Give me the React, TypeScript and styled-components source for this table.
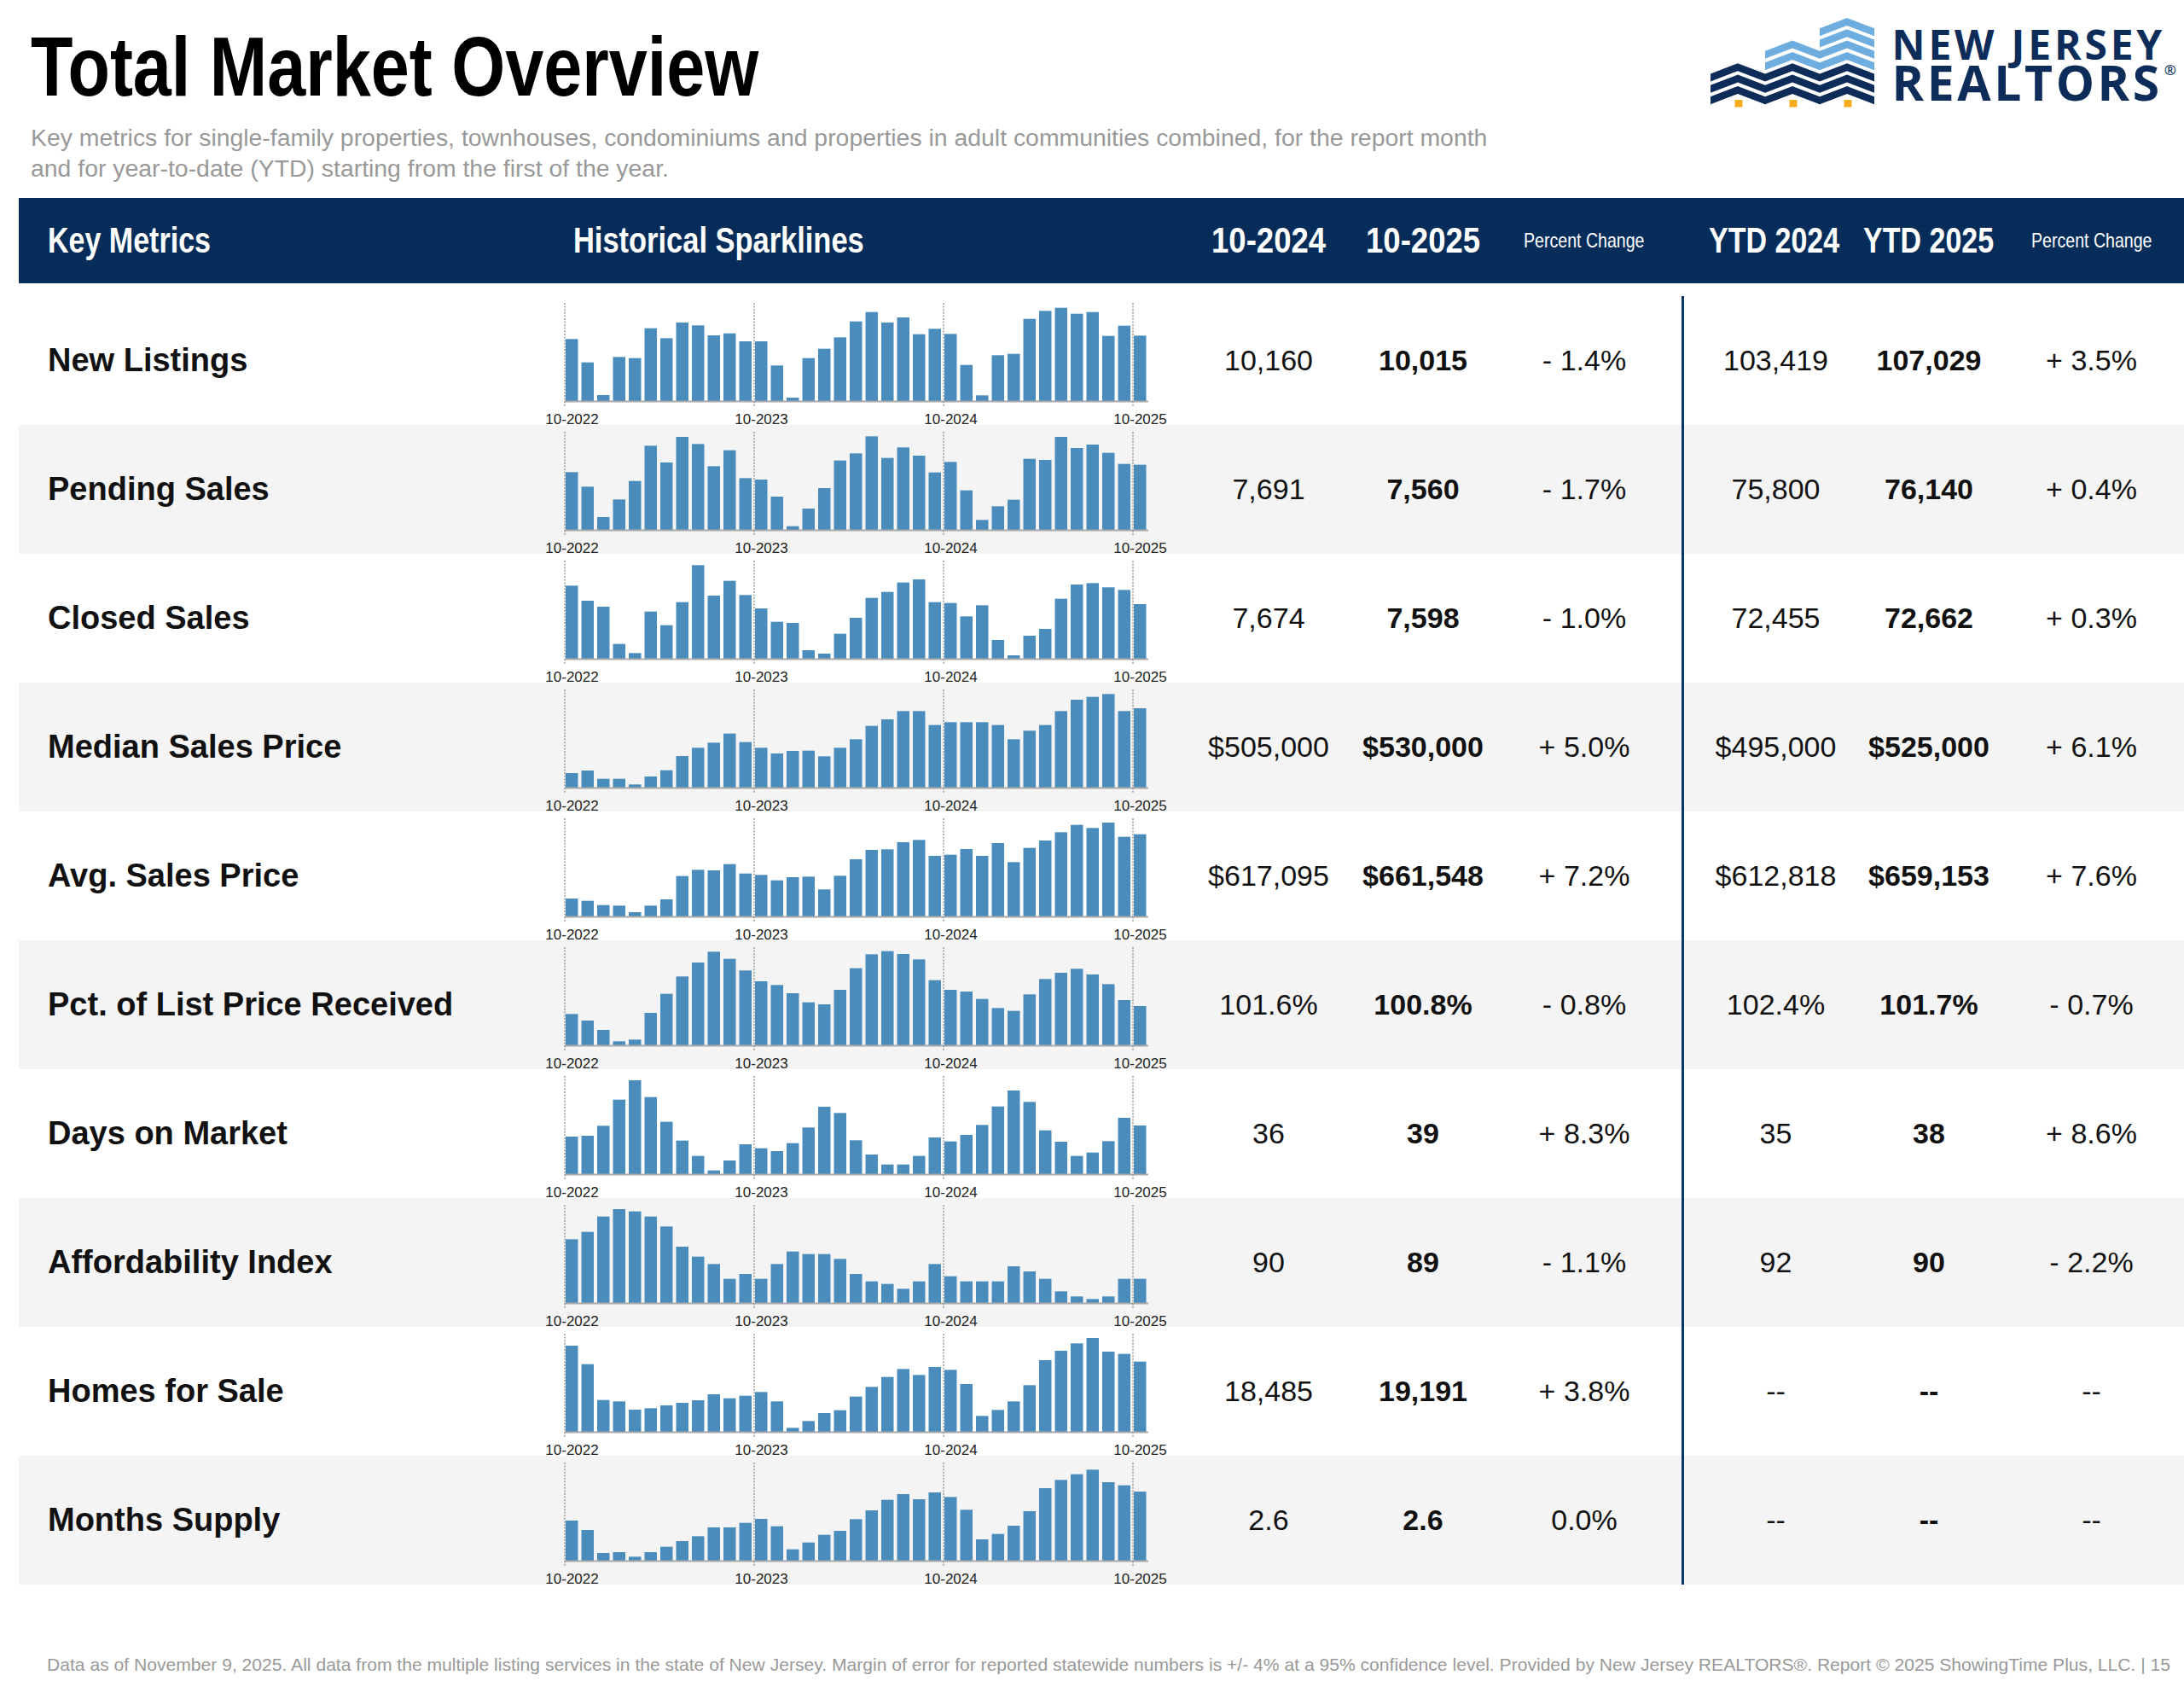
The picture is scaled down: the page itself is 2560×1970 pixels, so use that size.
import styled, { createGlobalStyle } from 'styled-components';

const GlobalStyle = createGlobalStyle`
  html, body {
    margin: 0;
    padding: 0;
    background: #fff;
  }
  body {
    font-family: "Liberation Sans", Arial, sans-serif;
    color: #111;
  }
`;

type Metric = {
  label: string;
  values: string[];
  bars: number[];
};

// bar heights in thirds of a pixel
const metrics: Metric[] = [
  {
    label: 'New Listings',
    values: ['10,160', '10,015', '- 1.4%', '103,419', '107,029', '+ 3.5%'],
    bars: [218, 136, 21, 155, 151, 256, 221, 276, 266, 231, 238, 210, 210, 125, 12, 151, 184, 224, 280, 313, 276, 294, 235, 254, 236, 127, 20, 161, 166, 289, 317, 328, 307, 313, 229, 265, 230],
  },
  {
    label: 'Pending Sales',
    values: ['7,691', '7,560', '- 1.7%', '75,800', '76,140', '+ 0.4%'],
    bars: [203, 152, 45, 107, 172, 296, 237, 327, 302, 224, 280, 182, 177, 117, 13, 75, 147, 244, 269, 329, 253, 290, 261, 202, 239, 139, 35, 83, 106, 250, 246, 327, 288, 300, 271, 232, 229],
  },
  {
    label: 'Closed Sales',
    values: ['7,674', '7,598', '- 1.0%', '72,455', '72,662', '+ 0.3%'],
    bars: [257, 204, 183, 52, 20, 166, 118, 199, 329, 222, 274, 224, 177, 130, 126, 30, 18, 88, 144, 214, 235, 268, 279, 199, 196, 149, 188, 66, 12, 81, 105, 211, 261, 266, 251, 242, 192],
  },
  {
    label: 'Median Sales Price',
    values: ['$505,000', '$530,000', '+ 5.0%', '$495,000', '$525,000', '+ 6.1%'],
    bars: [51, 60, 31, 31, 11, 39, 61, 111, 140, 158, 190, 160, 140, 120, 129, 130, 110, 140, 170, 217, 240, 269, 269, 220, 230, 230, 230, 220, 170, 200, 220, 269, 309, 319, 329, 269, 279],
  },
  {
    label: 'Avg. Sales Price',
    values: ['$617,095', '$661,548', '+ 7.2%', '$612,818', '$659,153', '+ 7.6%'],
    bars: [63, 55, 40, 38, 15, 38, 60, 142, 164, 162, 184, 151, 146, 127, 138, 140, 95, 143, 201, 234, 236, 261, 269, 213, 217, 237, 213, 258, 191, 241, 267, 296, 322, 311, 330, 280, 289],
  },
  {
    label: 'Pct. of List Price Received',
    values: ['101.6%', '100.8%', '- 0.8%', '102.4%', '101.7%', '- 0.7%'],
    bars: [110, 87, 54, 14, 20, 114, 181, 242, 291, 329, 304, 263, 225, 212, 183, 151, 144, 195, 271, 320, 331, 321, 302, 229, 195, 189, 163, 131, 121, 179, 233, 255, 269, 249, 215, 159, 138],
  },
  {
    label: 'Days on Market',
    values: ['36', '39', '+ 8.3%', '35', '38', '+ 8.6%'],
    bars: [132, 135, 170, 262, 330, 271, 184, 118, 64, 13, 48, 105, 91, 81, 109, 164, 237, 215, 119, 69, 34, 34, 64, 129, 115, 138, 173, 238, 294, 254, 154, 114, 64, 76, 116, 198, 171],
  },
  {
    label: 'Affordability Index',
    values: ['90', '89', '- 1.1%', '92', '90', '- 2.2%'],
    bars: [224, 250, 304, 330, 322, 304, 269, 198, 163, 137, 85, 102, 85, 137, 181, 172, 172, 155, 102, 76, 67, 50, 76, 137, 94, 76, 76, 76, 129, 111, 85, 41, 23, 14, 23, 85, 85],
  },
  {
    label: 'Homes for Sale',
    values: ['18,485', '19,191', '+ 3.8%', '--', '--', '--'],
    bars: [303, 238, 112, 107, 78, 83, 93, 102, 111, 132, 118, 127, 140, 107, 14, 38, 66, 76, 124, 158, 193, 221, 200, 228, 218, 168, 56, 77, 107, 164, 252, 285, 311, 330, 282, 274, 247],
  },
  {
    label: 'Months Supply',
    values: ['2.6', '2.6', '0.0%', '--', '--', '--'],
    bars: [141, 108, 27, 30, 14, 30, 49, 69, 86, 117, 117, 133, 147, 121, 40, 64, 91, 105, 146, 177, 214, 234, 216, 240, 224, 179, 75, 94, 123, 174, 255, 284, 304, 320, 276, 265, 243],
  },
];

const Page = styled.div`
  width: 2560px;
  height: 1970px;
  display: flex;
  flex-direction: column;
  overflow: hidden;
`;

const TopBar = styled.header`
  height: 232px;
  display: flex;
  justify-content: space-between;
  align-items: flex-start;
`;

const TitleBlock = styled.div`
  padding: 29px 0 0 36px;
`;

// condensed face: no narrow family is installed, so squeeze Liberation Sans
const Narrow = styled.span<{ $sx?: number; $origin?: string }>`
  display: inline-block;
  flex: none;
  white-space: nowrap;
  transform: scaleX(${(p) => p.$sx ?? 0.82});
  transform-origin: ${(p) => p.$origin || 'left'} center;
`;

const Title = styled.h1`
  margin: 0;
  font-weight: 700;
  font-size: 98px;
  line-height: 98px;
  color: #000;
`;

const Subtitle = styled.p`
  margin: 16px 0 0;
  font-size: 28.4px;
  line-height: 36px;
  color: #999;
  white-space: nowrap;
`;

const Logo = styled.div`
  display: flex;
  align-items: flex-start;
  gap: 20px;
  padding: 15px 9px 0 0;
`;

const LogoText = styled.div`
  margin-top: 15px;
  font-family: "Open Sans", sans-serif;
  font-weight: 700;
  color: #0d2c5a;
  line-height: 44px;
`;

const LogoLine = styled.div<{ $size: number; $spacing: number }>`
  font-size: ${(p) => p.$size}px;
  letter-spacing: ${(p) => p.$spacing}px;
  white-space: nowrap;
`;

const Registered = styled.span`
  font-size: 17px;
  font-weight: 600;
  letter-spacing: 0;
  line-height: 0;
  vertical-align: 30px;
  margin-left: 2px;
`;

const Table = styled.section`
  margin-left: 22px;
`;

const COLUMNS = '618px 757px 180px 182px 212px 218px 144px 1fr';

const HeaderBar = styled.div`
  height: 100px;
  display: grid;
  grid-template-columns: ${COLUMNS};
  align-items: center;
  background: #062d5a;
  color: #fff;
  font-weight: 700;
  font-size: 42px;
`;

const HeadCell = styled.div<{ $left?: number; $right?: number; $small?: boolean; $start?: boolean }>`
  display: flex;
  justify-content: ${(p) => (p.$start ? 'flex-start' : 'center')};
  padding-left: ${(p) => p.$left ?? 0}px;
  padding-right: ${(p) => p.$right ?? 0}px;
  white-space: nowrap;
  ${(p) => p.$small && 'font-size: 24px; font-weight: 400;'}
`;

const Rows = styled.div`
  margin-top: 15px;
`;

const Row = styled.div<{ $shade: boolean }>`
  height: 151px;
  display: grid;
  grid-template-columns: ${COLUMNS};
  background: ${(p) => (p.$shade ? '#f4f4f4' : '#fff')};
`;

const Label = styled.div`
  display: flex;
  align-items: center;
  padding-left: 34px;
  font-size: 38px;
  font-weight: 700;
  color: #111;
  white-space: nowrap;
`;

const SparkCell = styled.div`
  position: relative;
`;

const Value = styled.div<{ $bold?: boolean; $divider?: boolean; $pad?: string }>`
  display: flex;
  align-items: center;
  justify-content: center;
  padding: ${(p) => p.$pad || '0'};
  font-size: 34px;
  font-weight: ${(p) => (p.$bold ? 700 : 400)};
  color: #111;
  white-space: nowrap;
  border-left: ${(p) => (p.$divider ? '3px solid #0b3563' : 'none')};
`;

const Footer = styled.footer`
  margin-top: 82px;
  padding-left: 55px;
  font-size: 21.1px;
  line-height: 24px;
  color: #999;
  white-space: nowrap;
`;

const BAR = '#4a8cbc';

const Sparkline = ({ bars }: { bars: number[] }) => (
  <svg width={757} height={151} viewBox="0 0 757 151" style={{ display: 'block', overflow: 'visible' }}>
    {bars.map((v, i) => (
      <rect key={i} x={23 + i * 18.5} y={123 - v / 3} width={14.5} height={v / 3} fill={BAR} />
    ))}
    <line x1={22} x2={706} y1={123.5} y2={123.5} stroke="#a9a9a9" strokeWidth={2} />
    {[0, 1, 2, 3].map((k) => (
      <g key={k}>
        <line
          x1={22 + 222 * k}
          x2={22 + 222 * k}
          y1={8}
          y2={129}
          stroke="#8d8d8d"
          strokeWidth={1.3}
          strokeDasharray="2 1.6"
        />
        <text
          x={30.5 + 222 * k}
          y={149.5}
          textAnchor="middle"
          fontSize={17}
          fontFamily='"Liberation Sans", Arial, sans-serif'
          fill="#222"
        >
          10-{2022 + k}
        </text>
      </g>
    ))}
  </svg>
);

const stripe = (k: number, from: number) => {
  const t = 9;
  const xs = [0, 32, 64, 96, 128, 160, 192].filter((x) => x >= from);
  const yc = (x: number) => ((x / 32) % 2 === 1 ? 63.7 : 76) + 13.33 * k;
  const top = xs.map((x) => `${x},${(yc(x) - t / 2).toFixed(1)}`);
  const bottom = [...xs].reverse().map((x) => `${x},${(yc(x) + t / 2).toFixed(1)}`);
  return [...top, ...bottom].join(' ');
};

const LogoMark = () => (
  <svg width={193} height={112} viewBox="0 0 193 112">
    {[0, 1, 2].map((k) => (
      <polygon key={`n${k}`} points={stripe(k, 0)} fill="#0d2c5a" />
    ))}
    {[-1, -2].map((k) => (
      <polygon key={`m${k}`} points={stripe(k, 64)} fill="#6dade0" />
    ))}
    {[-3, -4].map((k) => (
      <polygon key={`r${k}`} points={stripe(k, 128)} fill="#6dade0" />
    ))}
    {[33, 97, 161].map((x) => (
      <rect key={x} x={x - 4.5} y={102} width={9} height={8.5} fill="#f5ab1e" />
    ))}
  </svg>
);

export default function App() {
  return (
    <Page>
      <GlobalStyle />
      <TopBar>
        <TitleBlock>
          <Title>
            <Narrow $sx={0.826}>Total Market Overview</Narrow>
          </Title>
          <Subtitle>
            Key metrics for single-family properties, townhouses, condominiums and properties in adult communities combined, for the report month
            <br />
            and for year-to-date (YTD) starting from the first of the year.
          </Subtitle>
        </TitleBlock>
        <Logo>
          <LogoMark />
          <LogoText>
            <LogoLine $size={48} $spacing={3.8}>NEW JERSEY</LogoLine>
            <LogoLine $size={57} $spacing={3.6}>
              REALTORS<Registered>®</Registered>
            </LogoLine>
          </LogoText>
        </Logo>
      </TopBar>

      <Table>
        <HeaderBar>
          <HeadCell $start $left={34}>
            <Narrow $sx={0.81}>Key Metrics</Narrow>
          </HeadCell>
          <HeadCell $start $left={32}>
            <Narrow $sx={0.82}>Historical Sparklines</Narrow>
          </HeadCell>
          <HeadCell>
            <Narrow $sx={0.87} $origin="center">10-2024</Narrow>
          </HeadCell>
          <HeadCell>
            <Narrow $sx={0.87} $origin="center">10-2025</Narrow>
          </HeadCell>
          <HeadCell $small $right={16}>
            <Narrow $sx={0.815} $origin="center">Percent Change</Narrow>
          </HeadCell>
          <HeadCell>
            <Narrow $sx={0.81} $origin="center">YTD 2024</Narrow>
          </HeadCell>
          <HeadCell>
            <Narrow $sx={0.81} $origin="center">YTD 2025</Narrow>
          </HeadCell>
          <HeadCell $small $left={10}>
            <Narrow $sx={0.815} $origin="center">Percent Change</Narrow>
          </HeadCell>
        </HeaderBar>
        <Rows>
          {metrics.map((m, i) => (
            <Row key={m.label} $shade={i % 2 === 1}>
              <Label>{m.label}</Label>
              <SparkCell>
                <Sparkline bars={m.bars} />
              </SparkCell>
              <Value>{m.values[0]}</Value>
              <Value $bold>{m.values[1]}</Value>
              <Value $pad="0 16px 0 0">{m.values[2]}</Value>
              <Value $divider>{m.values[3]}</Value>
              <Value $bold>{m.values[4]}</Value>
              <Value $pad="0 0 0 10px">{m.values[5]}</Value>
            </Row>
          ))}
        </Rows>
      </Table>

      <Footer>
        Data as of November 9, 2025. All data from the multiple listing services in the state of New Jersey. Margin of error for reported
        statewide numbers is +/- 4% at a 95% confidence level. Provided by New Jersey REALTORS®. Report © 2025 ShowingTime Plus, LLC. | 15
      </Footer>
    </Page>
  );
}
